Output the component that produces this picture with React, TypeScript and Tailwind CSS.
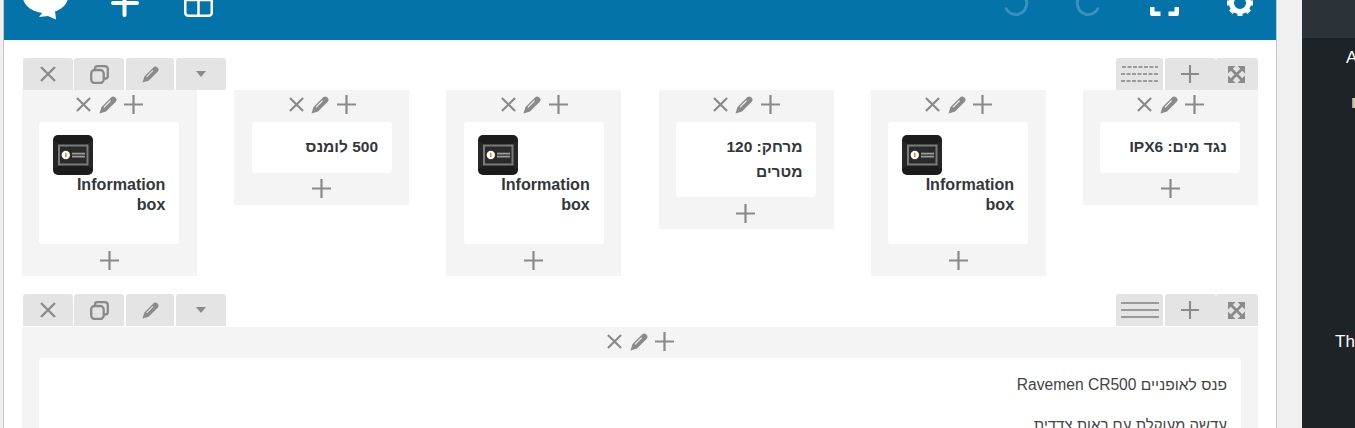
import React from "react";

const G = "#8a8a8a";

const XIcon = ({ s = 16 }: { s?: number }) => (
  <svg width={s} height={s} viewBox="0 0 16 16" fill="none" stroke={G} strokeWidth="2.300"><path d="M1 1 15 15M15 1 1 15" /></svg>
);
const PlusIcon = ({ s = 18 }: { s?: number }) => (
  <svg width={s} height={s} viewBox="0 0 18 18" fill="none" stroke={G} strokeWidth="2.100"><path d="M9 0v18M0 9h18" /></svg>
);
const PencilIcon = ({ s = 18 }: { s?: number }) => (
  <svg width={s} height={s} viewBox="0 0 18 18" fill={G}>
    <path
      d="M0.500 17.500 2.500 11 12.300 1.200C13.300.2 15 .2 16 1.200L16.800 2C17.800 3 17.800 4.700 16.800 5.700L7 15.500ZM11.200 4.300 4.500 11 5.300 11.800 12 5.100Z"
      fillRule="evenodd"
    />
  </svg>
);
const DupIcon = () => (
  <svg width="19" height="19" viewBox="0 0 19 19" fill="none" stroke={G} strokeWidth="2.300">
    <rect x="1.200" y="5" width="12.500" height="13" rx="3.500" />
    <path d="M5 5V3.500C5 2 6 1.200 7.500 1.200h7C16.500 1.200 17.800 2.200 17.800 4v7c0 1.500-1 2.500-2.300 2.500h-2" />
  </svg>
);
const Caret = () => (
  <svg width="10" height="6" viewBox="0 0 10 6" fill={G}><path d="M0 0h10L5 6Z" /></svg>
);
const ExpandIcon = () => (
  <svg width="17" height="17" viewBox="0 0 17 17" fill={G}>
    <path d="M0 0h7.500L0 7.500ZM17 0v7.500L9.500 0ZM0 17V9.500L7.500 17ZM17 17H9.500L17 9.500Z" />
    <path d="M2 2 15 15M15 2 2 15" stroke={G} strokeWidth="2.800" />
  </svg>
);
const Dotted = () => (
  <svg width="38" height="16" viewBox="0 0 38 16" fill="none" stroke="#9a9a9a" strokeWidth="2" strokeDasharray="4 1.500"><path d="M1 1h36M0 8h38M0 15h38" /></svg>
);
const Lines = () => (
  <svg width="38" height="16" viewBox="0 0 38 16" fill="none" stroke="#9a9a9a" strokeWidth="2"><path d="M0 1h38M0 8h38M0 15h38" /></svg>
);

const InfoBoxIcon = () => (
  <svg width="40" height="40" viewBox="0 0 40 40" className="block">
    <rect width="40" height="40" rx="5" fill="#1c1c1c" />
    <path d="M0 6 20 15 40 6V34L20 25 0 34Z" fill="#262626" />
    <rect x="6" y="10.500" width="28.500" height="19" fill="#2a2a2a" stroke="#7a7a7a" strokeWidth="2" />
    <circle cx="12.800" cy="20" r="4.200" fill="#fff" />
    <rect x="12.200" y="17.800" width="1.300" height="4.500" fill="#b8860b" />
    <rect x="19" y="17.700" width="13" height="1.800" fill="#9c9c9c" />
    <rect x="19" y="20.700" width="13" height="1.800" fill="#9c9c9c" />
  </svg>
);

const Btn = ({ w, children, className = "" }: { w: string; children: React.ReactNode; className?: string }) => (
  <div className={`flex h-[32px] items-center justify-center rounded-t-[3px] bg-[#e4e4e4] ${w} ${className}`}>{children}</div>
);

const Toolbar = ({ layout, h }: { layout: React.ReactNode; h: string }) => (
  <div className={`flex items-start justify-between ${h}`}>
    <div className="flex pl-px">
      <Btn w="w-[50px]"><XIcon /></Btn>
      <Btn w="w-[50px]" className="ml-px"><DupIcon /></Btn>
      <Btn w="w-[48px]" className="ml-[2px]"><PencilIcon s={17} /></Btn>
      <Btn w="w-[50px]" className="ml-[2px]"><Caret /></Btn>
    </div>
    <div className="flex">
      <Btn w="w-[47px]">{layout}</Btn>
      <Btn w="w-[51px]" className="ml-[2px] pr-px"><PlusIcon /></Btn>
      <Btn w="w-[42px]" className="pr-px"><ExpandIcon /></Btn>
    </div>
  </div>
);

const TopIcons = () => (
  <div className="ml-px flex h-[32px] items-center justify-center gap-[7.500px] pb-[3px]">
    <XIcon s={15} />
    <PencilIcon />
    <PlusIcon s={19} />
  </div>
);

const Column = ({ children }: { children: React.ReactNode }) => (
  <div className="w-[175px] bg-[#f4f4f4] pl-[17.400px] pr-[17.600px]">
    <TopIcons />
    <div className="rounded-[3px] bg-white">{children}</div>
    <div className="flex h-[32px] items-center justify-center"><PlusIcon s={19} /></div>
  </div>
);

const Info = () => (
  <div className="h-[122px] px-[14px] pt-[13px]">
    <InfoBoxIcon />
    <div className="-mt-px text-right text-[16.100px] font-bold leading-[20px] text-[#32373c]">Information box</div>
  </div>
);

const Heb = ({ t }: { t: string }) => (
  <div dir="rtl" className="px-[13.500px] py-[13px] text-right text-[15.500px] font-bold leading-[24.700px] text-[#32373c]">{t}</div>
);

const GEAR_ANGLES = [0, 45, 90, 135, 180, 225, 270, 315];

export default function App() {
  return (
    <div className="flex h-[428px] w-[1355px] overflow-hidden bg-[#f0f0f1] font-['Liberation_Sans',sans-serif]">
      <div className="ml-[3px] h-full w-[1274px] shrink-0 border-x border-[#c3c4c7] bg-white">
        <header className="flex h-[40px] items-start overflow-hidden bg-[#0473aa]">
          <div className="-mt-[14px] flex w-full items-start text-white">
            <svg width="46" height="34" viewBox="0 0 46 34" fill="#fff" className="ml-[19px]">
              <ellipse cx="22.500" cy="11" rx="22.500" ry="16" />
              <path d="M14 27 L20 26 L16 31 L25 30 L33 33.500 L32 25Z" />
            </svg>
            <svg width="28" height="31" viewBox="0 0 28 31" fill="none" stroke="#fff" strokeWidth="4" strokeLinecap="round" className="ml-[42px]"><path d="M13.500 0V29M2 17H26" /></svg>
            <svg width="29" height="31" viewBox="0 0 29 31" fill="none" stroke="#fff" strokeWidth="2.500" className="ml-[45px]"><rect x="1.250" y="1.250" width="26.500" height="28.500" rx="3" /><path d="M14.500 14V30M1 14H28" /></svg>
            <svg width="26" height="32" viewBox="0 0 26 32" fill="none" stroke="#3a90bd" strokeWidth="3" className="ml-[791px]"><path d="M12 6.500A11 11 0 1 1 1.500 21.500" /></svg>
            <svg width="26" height="32" viewBox="0 0 26 32" fill="none" stroke="#3a90bd" strokeWidth="3" className="ml-[44px]"><path d="M14 6.500A11 11 0 1 0 24.500 21.500" /></svg>
            <svg width="29" height="31" viewBox="0 0 29 31" fill="#fff" className="ml-[50px]"><path d="M0 21h4.500v4.500h6V30H2a2 2 0 0 1-2-2ZM29 21h-4.500v4.500h-6V30H27a2 2 0 0 0 2-2Z" /></svg>
            <svg width="26" height="32" viewBox="0 0 26 32" fill="#fff" className="ml-[48px]">
              <circle cx="13" cy="17" r="8.500" fill="none" stroke="#fff" strokeWidth="5" />
              {GEAR_ANGLES.map((a) => (
                <rect key={a} x="10.500" y="4" width="5" height="4" transform={`rotate(${a} 13 17)`} />
              ))}
            </svg>
          </div>
        </header>
        <div className="px-[18px] pt-[18px]">
          <Toolbar layout={<Dotted />} h="h-[32px]" />
          <div className="flex items-start justify-between">
            <Column><Info /></Column>
            <Column><Heb t="500 לומנס" /></Column>
            <Column><Info /></Column>
            <Column><Heb t="מרחק: 120 מטרים" /></Column>
            <Column><Info /></Column>
            <Column><Heb t="נגד מים: IPX6" /></Column>
          </div>
          <div className="mt-[18px]">
            <Toolbar layout={<Lines />} h="h-[33px]" />
            <div className="bg-[#f4f4f4] px-[17px]">
              <div className="ml-px flex h-[31px] items-center justify-center gap-[7.500px] pb-[2px]">
                <XIcon s={15} />
                <PencilIcon />
                <PlusIcon s={19} />
              </div>
              <div dir="rtl" className="rounded-[3px] bg-white px-[14px] pt-[16px] text-[15.600px] leading-[22px] text-[#444]">
                <p>פנס לאופניים Ravemen CR500</p>
                <p className="mt-[18px] text-[15px]">עדשה מעוקלת עם ראות צדדית</p>
              </div>
            </div>
          </div>
        </div>
      </div>
      <div className="ml-[25px] flex-1 overflow-hidden whitespace-nowrap bg-[#1d2327] text-[17px] text-white">
        <div className="h-[38px] bg-[#2c3338]" />
        <div className="pl-[44px] pt-[10px] leading-[20px]">A</div>
        <div className="ml-[50px] mt-[30px] h-[10px] w-[3px] border-l border-[#72aee6] bg-[#e0c088]" />
        <div className="pl-[33px] pt-[224px] leading-[20px]">Th</div>
      </div>
    </div>
  );
}
